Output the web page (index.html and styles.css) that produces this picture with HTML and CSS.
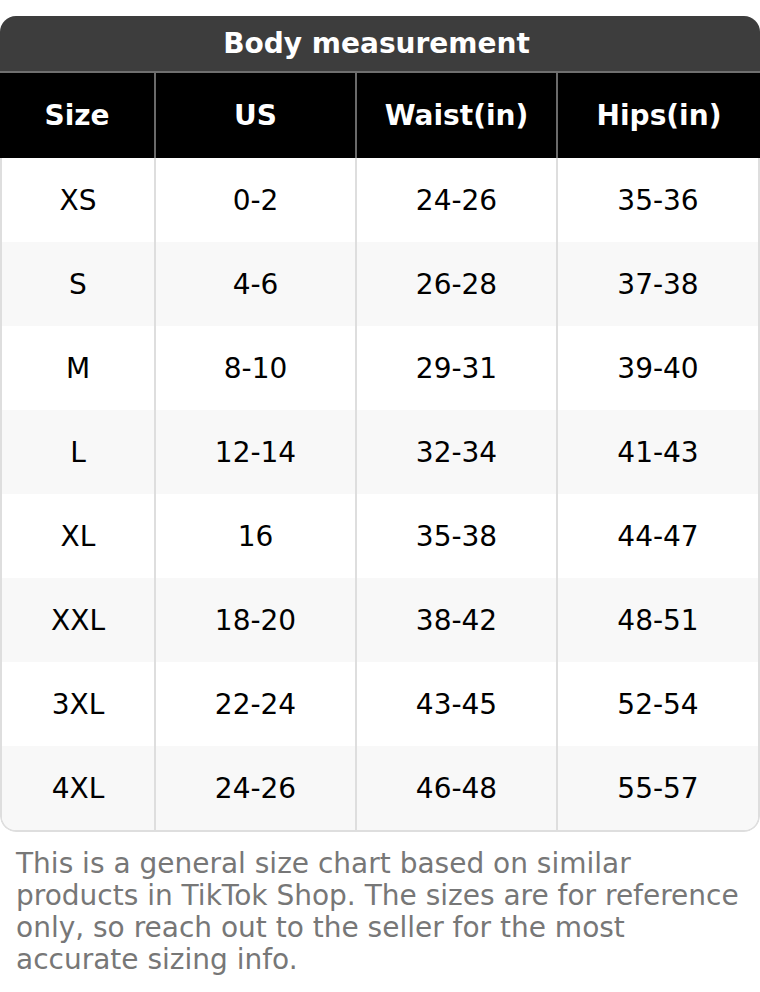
FILE: index.html
```html
<!DOCTYPE html>
<html lang="en">
<head>
<meta charset="utf-8">
<title>Body measurement</title>
<link rel="stylesheet" href="styles.css">
</head>
<body>
<div class="chart">
  <div class="title">Body measurement</div>
  <div class="head">
    <div class="cell">Size</div>
    <div class="cell">US</div>
    <div class="cell">Waist(in)</div>
    <div class="cell">Hips(in)</div>
  </div>
  <div class="body">
    <div class="row"><div class="cell">XS</div><div class="cell">0-2</div><div class="cell">24-26</div><div class="cell">35-36</div></div>
    <div class="row"><div class="cell">S</div><div class="cell">4-6</div><div class="cell">26-28</div><div class="cell">37-38</div></div>
    <div class="row"><div class="cell">M</div><div class="cell">8-10</div><div class="cell">29-31</div><div class="cell">39-40</div></div>
    <div class="row"><div class="cell">L</div><div class="cell">12-14</div><div class="cell">32-34</div><div class="cell">41-43</div></div>
    <div class="row"><div class="cell">XL</div><div class="cell">16</div><div class="cell">35-38</div><div class="cell">44-47</div></div>
    <div class="row"><div class="cell">XXL</div><div class="cell">18-20</div><div class="cell">38-42</div><div class="cell">48-51</div></div>
    <div class="row"><div class="cell">3XL</div><div class="cell">22-24</div><div class="cell">43-45</div><div class="cell">52-54</div></div>
    <div class="row"><div class="cell">4XL</div><div class="cell">24-26</div><div class="cell">46-48</div><div class="cell">55-57</div></div>
  </div>
</div>
<p class="note">This is a general size chart based on similar products in TikTok Shop. The sizes are for reference only, so reach out to the seller for the most accurate sizing info.</p>
</body>
</html>
```

FILE: styles.css
```css
* { box-sizing: border-box; }
html, body { margin: 0; padding: 0; background: #fff; }
body {
  padding-top: 16px;
  font-family: "DejaVu Sans", sans-serif;
  width: 760px;
}
.chart {
  border-radius: 16px;
  overflow: hidden;
}
.title {
  background: #3d3d3d;
  color: #fff;
  font-weight: 700;
  font-size: 28px;
  height: 57px;
  line-height: 55px;
  padding-right: 7px;
  text-align: center;
  border-bottom: 2px solid #6f6f6f;
}
.head {
  display: grid;
  grid-template-columns: 154px 201px 201px 204px;
  background: #000;
  color: #fff;
  font-weight: 700;
  font-size: 28px;
}
.head .cell {
  height: 85px;
  display: flex;
  align-items: center;
  justify-content: center;
}
.head .cell + .cell { border-left: 2px solid #6a6a6a; }
.body {
  border: 2px solid #dedede;
  border-top: 0;
  border-radius: 0 0 16px 16px;
  overflow: hidden;
}
.row {
  display: grid;
  grid-template-columns: 152px 201px 201px 202px;
  font-size: 28px;
  color: #000;
  background: #fff;
}
.row:nth-child(even) { background: #f8f8f8; }
.row .cell {
  height: 84px;
  display: flex;
  align-items: center;
  justify-content: center;
}
.row .cell + .cell { border-left: 2px solid #dedede; }
.note {
  margin: 0;
  padding: 16px 16px 0;
  color: #777;
  font-size: 28px;
  line-height: 32px;
}
```
